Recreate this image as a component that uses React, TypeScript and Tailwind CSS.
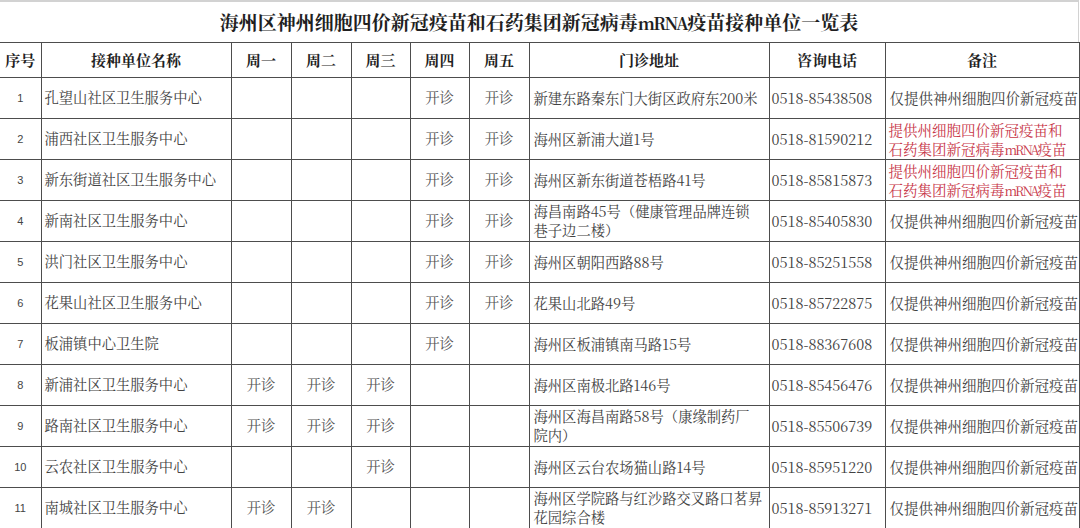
type Row = {
  no: number;
  name: string;
  days: string; // which of 周一..周五 are open, e.g. "00011"
  addr: string[];
  phone: string;
  red?: boolean;
};

const rows: Row[] = [
  { no: 1, name: "孔望山社区卫生服务中心", days: "00011", addr: ["新建东路秦东门大街区政府东200米"], phone: "0518-85438508" },
  { no: 2, name: "浦西社区卫生服务中心", days: "00011", addr: ["海州区新浦大道1号"], phone: "0518-81590212", red: true },
  { no: 3, name: "新东街道社区卫生服务中心", days: "00011", addr: ["海州区新东街道苍梧路41号"], phone: "0518-85815873", red: true },
  { no: 4, name: "新南社区卫生服务中心", days: "00011", addr: ["海昌南路45号（健康管理品牌连锁", "巷子边二楼）"], phone: "0518-85405830" },
  { no: 5, name: "洪门社区卫生服务中心", days: "00011", addr: ["海州区朝阳西路88号"], phone: "0518-85251558" },
  { no: 6, name: "花果山社区卫生服务中心", days: "00011", addr: ["花果山北路49号"], phone: "0518-85722875" },
  { no: 7, name: "板浦镇中心卫生院", days: "00010", addr: ["海州区板浦镇南马路15号"], phone: "0518-88367608" },
  { no: 8, name: "新浦社区卫生服务中心", days: "11100", addr: ["海州区南极北路146号"], phone: "0518-85456476" },
  { no: 9, name: "路南社区卫生服务中心", days: "11100", addr: ["海州区海昌南路58号（康缘制药厂", "院内）"], phone: "0518-85506739" },
  { no: 10, name: "云农社区卫生服务中心", days: "00100", addr: ["海州区云台农场猫山路14号"], phone: "0518-85951220" },
  { no: 11, name: "南城社区卫生服务中心", days: "11000", addr: ["海州区学院路与红沙路交叉路口茗昇", "花园综合楼"], phone: "0518-85913271" },
];

const heads = ["序号", "接种单位名称", "周一", "周二", "周三", "周四", "周五", "门诊地址", "咨询电话", "备注"];

const cell = "border border-[#4d4d4d] p-0 align-middle";

export default function App() {
  return (
    <div className="w-[1080px] h-[528px] overflow-hidden bg-white font-['Noto_Serif_CJK_SC','Liberation_Serif','Noto_Sans_CJK_SC',serif] text-[#424242]">
      <div className="h-[42px] w-[1079px] border-t-2 border-r border-[#d2d2d2] flex items-center justify-center text-[19px] font-bold text-[#1f1f1f]">
        <span>
          海州区神州细胞四价新冠疫苗和石药集团新冠病毒
          <span className="text-[17px] tracking-[-1.5px]">mRNA</span>
          疫苗接种单位一览表
        </span>
      </div>
      <table className="table-fixed border-collapse w-[1079px]">
        <colgroup>
          <col className="w-[41px]" />
          <col className="w-[190px]" />
          <col className="w-[60px]" />
          <col className="w-[60px]" />
          <col className="w-[59px]" />
          <col className="w-[59px]" />
          <col className="w-[60px]" />
          <col className="w-[240px]" />
          <col className="w-[116px]" />
          <col className="w-[194px]" />
        </colgroup>
        <thead>
          <tr className="h-[35px]">
            {heads.map((h, i) => (
              <th
                key={h}
                className={`${cell} ${i === 0 ? "border-l-0" : ""} text-center text-[15px] font-bold text-[#1f1f1f]`}
              >
                {h}
              </th>
            ))}
          </tr>
        </thead>
        <tbody>
          {rows.map((r) => (
            <tr key={r.no} className="h-[41px]">
              <td className={`${cell} border-l-0 text-center text-[11px] font-['Liberation_Sans',sans-serif] text-[#444]`}>
                {r.no}
              </td>
              <td className={`${cell} pl-[3px] text-[14.3px] whitespace-nowrap`}>{r.name}</td>
              {r.days.split("").map((d, i) => (
                <td key={i} className={`${cell} text-center text-[14.3px] text-[#555]`}>
                  {d === "1" ? "开诊" : ""}
                </td>
              ))}
              <td className={`${cell} pl-[4px] text-[14.3px] leading-[19px] whitespace-nowrap`}>
                {r.addr.map((a) => (
                  <div key={a}>{a}</div>
                ))}
              </td>
              <td className={`${cell} pl-[2px] text-[14.5px] whitespace-nowrap`}>{r.phone}</td>
              {r.red ? (
                <td className={`${cell} pl-[3px] whitespace-nowrap text-[14.5px] leading-[19px] text-[#c8384a]`}>
                  <div>提供州细胞四价新冠疫苗和</div>
                  <div>
                    石药集团新冠病毒
                    <span className="text-[13px] leading-none tracking-[-2px]">mRNA</span>
                    疫苗
                  </div>
                </td>
              ) : (
                <td className={`${cell} pl-[4px] whitespace-nowrap text-[14.5px]`}>仅提供神州细胞四价新冠疫苗</td>
              )}
            </tr>
          ))}
        </tbody>
      </table>
    </div>
  );
}
